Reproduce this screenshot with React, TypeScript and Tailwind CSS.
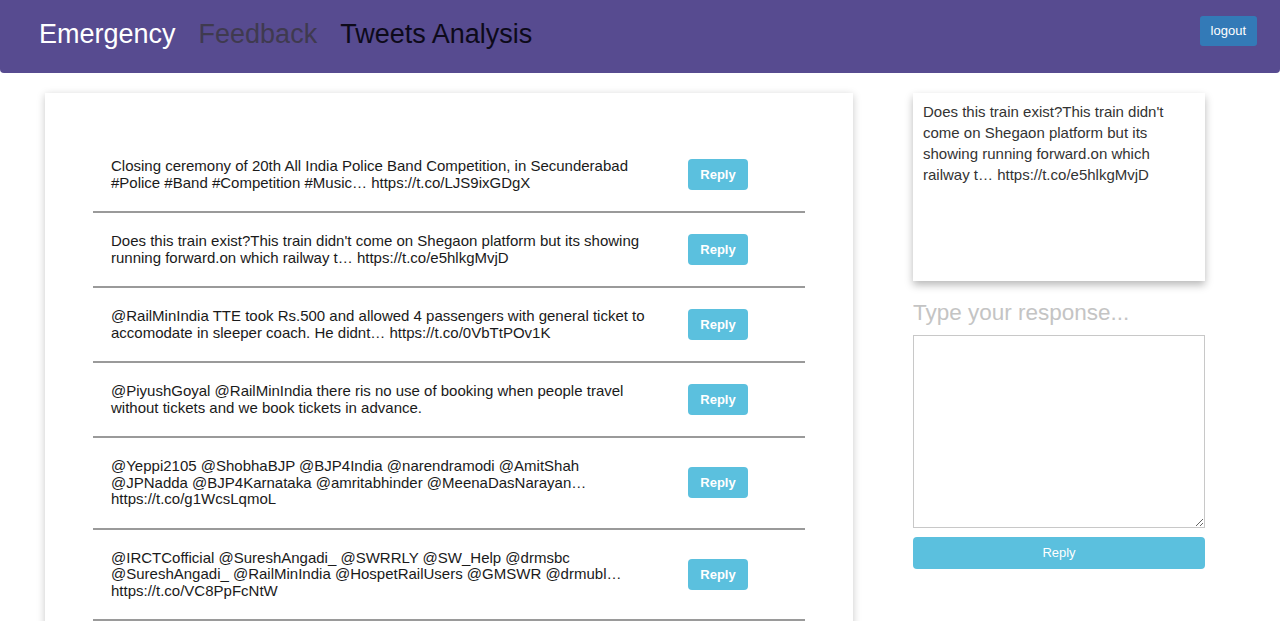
const tweets = [
  "Closing ceremony of 20th All India Police Band Competition, in Secunderabad #Police #Band #Competition #Music… https://t.co/LJS9ixGDgX",
  "Does this train exist?This train didn't come on Shegaon platform but its showing running forward.on which railway t… https://t.co/e5hlkgMvjD",
  "@RailMinIndia TTE took Rs.500 and allowed 4 passengers with general ticket to accomodate in sleeper coach. He didnt… https://t.co/0VbTtPOv1K",
  "@PiyushGoyal @RailMinIndia there ris no use of booking when people travel without tickets and we book tickets in advance.",
  "@Yeppi2105 @ShobhaBJP @BJP4India @narendramodi @AmitShah @JPNadda @BJP4Karnataka @amritabhinder @MeenaDasNarayan… https://t.co/g1WcsLqmoL",
  "@IRCTCofficial @SureshAngadi_ @SWRRLY @SW_Help @drmsbc @SureshAngadi_ @RailMinIndia @HospetRailUsers @GMSWR @drmubl… https://t.co/VC8PpFcNtW",
];

function App() {
  const selected = tweets[1];

  return (
    <div className="min-h-screen bg-white font-['Liberation_Sans',Arial,sans-serif]">
      {/* header */}
      <div className="flex items-start justify-between h-[73px] bg-[#574b90] rounded-b-[4px] pl-[39px] pr-[23px]">
        <div className="flex items-center gap-[23px] h-[68px] text-[27px] leading-none">
          <span className="text-white">Emergency</span>
          <span className="text-[#3f3a4f]">Feedback</span>
          <span className="text-[#0d0a1a]">Tweets Analysis</span>
        </div>
        <button className="h-[30px] px-[11px] mt-[16px] rounded-[3px] bg-[#337ab7] text-white text-[13px]">logout</button>
      </div>

      <div className="flex items-start pt-[20px] pl-[45px]">
        {/* tweet list */}
        <div className="w-[808px] bg-white shadow-[0_2px_8px_rgba(0,0,0,0.22)] pt-[45px] px-[48px] pb-[20px]">
          {tweets.map((t, i) => (
            <div key={i} className="flex items-center border-b-2 border-[#9a9a9a] py-[20px]">
              <p className="w-[595px] pl-[18px] pr-[33px] text-[15px] leading-[16.5px] text-[#1a1a1a]">{t}</p>
              <button className="w-[60px] h-[31px] rounded-[4px] bg-[#5bc0de] text-white text-[13px] font-bold">Reply</button>
            </div>
          ))}
        </div>

        {/* reply panel */}
        <div className="w-[292px] ml-[60px]">
          <div className="h-[188px] bg-white shadow-[0_4px_8px_rgba(0,0,0,0.28)] pt-[8px] px-[10px] text-[15px] leading-[21px] text-[#333]">
            {selected}
          </div>
          <input
            placeholder="Type your response..."
            className="w-full mt-[16px] h-[32px] text-[22.5px] outline-none placeholder:text-[#c4c4c4] text-[#333]"
          />
          <textarea className="block w-full h-[193px] mt-[6px] border border-[#c8c8c8] outline-none" />
          <button className="w-full h-[32px] mt-[9px] rounded-[4px] bg-[#5bc0de] text-white text-[13px]">Reply</button>
        </div>
      </div>
    </div>
  );
}

export default App;
